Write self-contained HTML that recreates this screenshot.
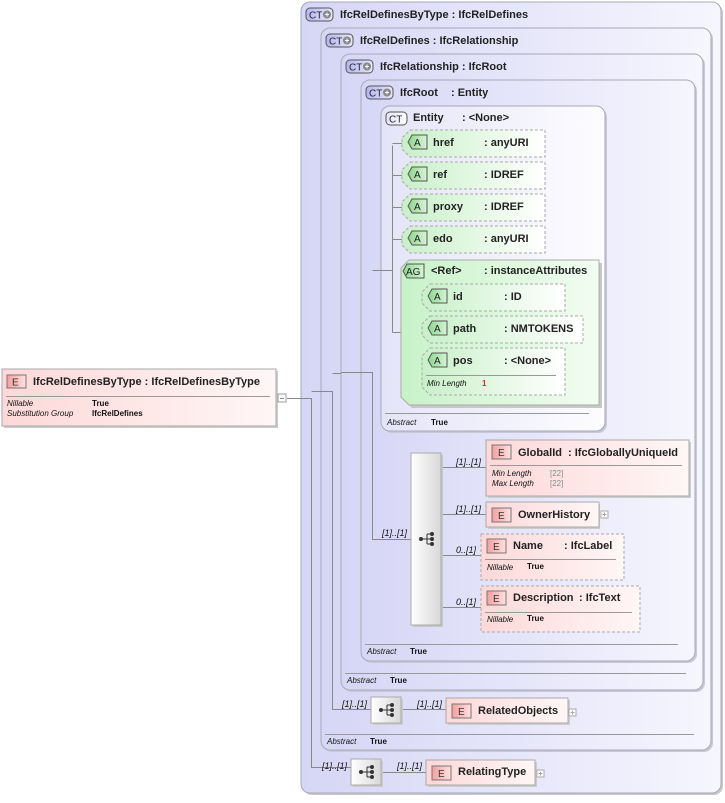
<!DOCTYPE html>
<html><head><meta charset="utf-8"><style>
html,body{margin:0;padding:0;background:#fff;}
svg text{font-family:"Liberation Sans",sans-serif;}
.b{font-size:11px;font-weight:bold;fill:#222;}
.s{font-size:8px;font-style:italic;fill:#111;}
.sv{font-size:8px;font-weight:bold;fill:#111;}
.g{font-size:8px;fill:#888;}
.m{font-size:9px;font-style:italic;fill:#111;}
</style></head><body>
<svg width="725" height="798" viewBox="0 0 725 798" xmlns="http://www.w3.org/2000/svg">
<defs>
<linearGradient id="ct" x1="0" x2="1" y1="0" y2="0"><stop offset="0" stop-color="#d6d6f6"/><stop offset="1" stop-color="#f6f6fe"/></linearGradient>
<linearGradient id="ent" x1="0" x2="1"><stop offset="0" stop-color="#e4e4f8"/><stop offset="1" stop-color="#fdfdff"/></linearGradient>
<linearGradient id="el" x1="0" x2="1"><stop offset="0" stop-color="#fdd8d8"/><stop offset="1" stop-color="#fff6f6"/></linearGradient>
<linearGradient id="at" x1="0" x2="1"><stop offset="0" stop-color="#c8f0c8"/><stop offset="1" stop-color="#ffffff"/></linearGradient>
<linearGradient id="ag" x1="0" x2="1"><stop offset="0" stop-color="#c8f2c8"/><stop offset="1" stop-color="#f2fdf2"/></linearGradient>
<linearGradient id="sq" x1="0" x2="1"><stop offset="0" stop-color="#ffffff"/><stop offset="1" stop-color="#d8d8d8"/></linearGradient>
<linearGradient id="eb" x1="0" x2="1"><stop offset="0" stop-color="#f4a0a0"/><stop offset="1" stop-color="#fde0e0"/></linearGradient>
<linearGradient id="ab" x1="0" x2="1"><stop offset="0" stop-color="#8ed48e"/><stop offset="1" stop-color="#d6f5d6"/></linearGradient>
<linearGradient id="cb" x1="0" x2="1"><stop offset="0" stop-color="#b6b6ee"/><stop offset="1" stop-color="#e6e6fb"/></linearGradient>
<g id="seqicon"><circle cx="-6" cy="0" r="2" fill="#333"/><path d="M-6 0H0M0 -5V5M0 -5H4M0 0H4M0 5H4" stroke="#333" fill="none"/><circle cx="5" cy="-5" r="2" fill="#333"/><circle cx="5" cy="0" r="2" fill="#333"/><circle cx="5" cy="5" r="2" fill="#333"/></g>
</defs>

<!-- nested CT boxes -->
<rect x="303" y="4" width="420" height="791" rx="9" fill="#c8c8c8"/>
<rect x="301" y="2" width="420" height="791" rx="9" fill="url(#ct)" stroke="#a8a8b8"/>
<rect x="323" y="30" width="390" height="722" rx="9" fill="#c8c8d8"/>
<rect x="321" y="28" width="390" height="722" rx="9" fill="url(#ct)" stroke="#a8a8b8"/>
<rect x="343" y="56" width="362" height="636" rx="9" fill="#c8c8d8"/>
<rect x="341" y="54" width="362" height="636" rx="9" fill="url(#ct)" stroke="#a8a8b8"/>
<rect x="363" y="82" width="334" height="581" rx="9" fill="#c8c8d8"/>
<rect x="361" y="80" width="334" height="581" rx="9" fill="url(#ct)" stroke="#a8a8b8"/>
<rect x="383" y="108" width="224" height="325" rx="9" fill="#c8c8d8"/>
<rect x="381" y="106" width="224" height="325" rx="9" fill="url(#ent)" stroke="#a8a8b8"/>

<!-- CT badges & headers -->
<g>
<rect x="306" y="8" width="27" height="13" rx="4" fill="url(#cb)" stroke="#555"/><text x="309" y="18.5" font-size="10" fill="#223">CT</text><circle cx="327" cy="14.5" r="4" fill="#888"/><path d="M325 14.5h4M327 12.5v4" stroke="#fff"/>
<text class="b" x="340" y="18">IfcRelDefinesByType : IfcRelDefines</text>
<rect x="326" y="34" width="27" height="13" rx="4" fill="url(#cb)" stroke="#555"/><text x="329" y="44.5" font-size="10" fill="#223">CT</text><circle cx="347" cy="40.5" r="4" fill="#888"/><path d="M345 40.5h4M347 38.5v4" stroke="#fff"/>
<text class="b" x="360" y="44">IfcRelDefines : IfcRelationship</text>
<rect x="346" y="60" width="27" height="13" rx="4" fill="url(#cb)" stroke="#555"/><text x="349" y="70.5" font-size="10" fill="#223">CT</text><circle cx="367" cy="66.5" r="4" fill="#888"/><path d="M365 66.5h4M367 64.5v4" stroke="#fff"/>
<text class="b" x="380" y="70">IfcRelationship : IfcRoot</text>
<rect x="366" y="86" width="27" height="13" rx="4" fill="url(#cb)" stroke="#555"/><text x="369" y="96.5" font-size="10" fill="#223">CT</text><circle cx="387" cy="92.5" r="4" fill="#888"/><path d="M385 92.5h4M387 90.5v4" stroke="#fff"/>
<text class="b" x="400" y="96">IfcRoot</text><text class="b" x="451" y="96">: Entity</text>
<rect x="386" y="112" width="21" height="13" rx="4" fill="url(#ent)" stroke="#555"/><text x="389" y="122.5" font-size="10" fill="#223">CT</text>
<text class="b" x="413" y="121">Entity</text><text class="b" x="462" y="121">: &lt;None&gt;</text>
</g>

<!-- connector lines -->
<g stroke="#888" fill="none" stroke-width="1">
<path d="M287 398.5H311.5V767.5H351"/>
<path d="M311.5 391.5H332.5V709.5H371"/>
<path d="M332.5 373.5H341M341 372.5H372.5V539.5H411"/>
<path d="M372.5 270.5H392.5M392.5 145.5V332.5M392.5 143.5H402M392.5 175.5H402M392.5 207.5H402M392.5 239.5H402M392.5 332.5H401"/>
<path d="M412 297.5H422M412 329.5H422M412 361.5H422M412 297V362"/>
<path d="M441 467.5H486M441 514.5H486M441 555.5H481M441 607.5H481"/>
<path d="M401 709.5H446M381 772.5H426"/>
</g>

<!-- left element -->
<rect x="4" y="371" width="274" height="57" fill="#ccc"/>
<rect x="2" y="369" width="274" height="57" fill="url(#el)" stroke="#aaa"/>
<rect x="7" y="375" width="19" height="13" fill="url(#eb)" stroke="#777"/><text x="12" y="385.5" font-size="10" fill="#333">E</text>
<text class="b" x="33" y="385">IfcRelDefinesByType : IfcRelDefinesByType</text>
<line x1="6" y1="396.5" x2="270" y2="396.5" stroke="#999"/>
<text class="s" x="7" y="406">Nillable</text><text class="sv" x="92" y="406">True</text>
<text class="s" x="7" y="416">Substitution Group</text><text class="sv" x="92" y="416">IfcRelDefines</text>
<rect x="278" y="394" width="8" height="8" fill="#fff" stroke="#999"/><path d="M280 398.5h4" stroke="#888"/>

<!-- attributes -->
<g>
<path d="M410 130H545V157H410L402 149V138Z" fill="url(#at)" stroke="#aaa" stroke-dasharray="3 2"/>
<path d="M412 135H427V149H412L408 142Z" fill="url(#ab)" stroke="#555"/><text x="414" y="146" font-size="10" fill="#222">A</text>
<text class="b" x="433" y="146">href</text><text class="b" x="484" y="146">: anyURI</text>

<path d="M410 162H545V189H410L402 181V170Z" fill="url(#at)" stroke="#aaa" stroke-dasharray="3 2"/>
<path d="M412 167H427V181H412L408 174Z" fill="url(#ab)" stroke="#555"/><text x="414" y="178" font-size="10" fill="#222">A</text>
<text class="b" x="433" y="178">ref</text><text class="b" x="484" y="178">: IDREF</text>

<path d="M410 194H545V221H410L402 213V202Z" fill="url(#at)" stroke="#aaa" stroke-dasharray="3 2"/>
<path d="M412 199H427V213H412L408 206Z" fill="url(#ab)" stroke="#555"/><text x="414" y="210" font-size="10" fill="#222">A</text>
<text class="b" x="433" y="210">proxy</text><text class="b" x="484" y="210">: IDREF</text>

<path d="M410 226H545V253H410L402 245V234Z" fill="url(#at)" stroke="#aaa" stroke-dasharray="3 2"/>
<path d="M412 231H427V245H412L408 238Z" fill="url(#ab)" stroke="#555"/><text x="414" y="242" font-size="10" fill="#222">A</text>
<text class="b" x="433" y="242">edo</text><text class="b" x="484" y="242">: anyURI</text>
</g>

<!-- attribute group -->
<path d="M412 263H602V408H412L404 400V271Z" fill="#c8c8c8"/>
<path d="M409 260H599V405H409L401 397V268Z" fill="url(#ag)" stroke="#aaa"/>
<path d="M407 264H424V278H407L403 271Z" fill="url(#ab)" stroke="#555"/><text x="406" y="275" font-size="10" fill="#222">AG</text>
<text class="b" x="431" y="274">&lt;Ref&gt;</text><text class="b" x="484" y="274">: instanceAttributes</text>

<path d="M430 284H565V311H430L422 303V292Z" fill="url(#at)" stroke="#aaa" stroke-dasharray="3 2"/>
<path d="M432 289H447V303H432L428 296Z" fill="url(#ab)" stroke="#555"/><text x="434" y="300" font-size="10" fill="#222">A</text>
<text class="b" x="453" y="300">id</text><text class="b" x="504" y="300">: ID</text>

<path d="M430 316H583V343H430L422 335V324Z" fill="url(#at)" stroke="#aaa" stroke-dasharray="3 2"/>
<path d="M432 321H447V335H432L428 328Z" fill="url(#ab)" stroke="#555"/><text x="434" y="332" font-size="10" fill="#222">A</text>
<text class="b" x="453" y="332">path</text><text class="b" x="504" y="332">: NMTOKENS</text>

<path d="M430 348H565V395H430L422 387V356Z" fill="url(#at)" stroke="#aaa" stroke-dasharray="3 2"/>
<path d="M432 353H447V367H432L428 360Z" fill="url(#ab)" stroke="#555"/><text x="434" y="364" font-size="10" fill="#222">A</text>
<text class="b" x="453" y="364">pos</text><text class="b" x="504" y="364">: &lt;None&gt;</text>
<line x1="426" y1="375.5" x2="556" y2="375.5" stroke="#999"/>
<text class="s" x="427" y="386">Min Length</text><text x="482" y="386" font-size="8" font-weight="bold" fill="#e22">1</text>

<!-- Entity abstract -->
<line x1="385" y1="413.5" x2="589" y2="413.5" stroke="#999"/>
<text class="s" x="387" y="425">Abstract</text><text class="sv" x="431" y="425">True</text>

<!-- sequence big -->
<rect x="413" y="455" width="30" height="172" fill="#c8c8c8"/>
<rect x="411" y="453" width="30" height="172" fill="url(#sq)" stroke="#aaa"/>
<use href="#seqicon" x="427" y="539"/>
<text class="m" x="382" y="536">[1]..[1]</text>
<text class="m" x="456" y="465">[1]..[1]</text>
<text class="m" x="456" y="512">[1]..[1]</text>
<text class="m" x="456" y="553">0..[1]</text>
<text class="m" x="456" y="605">0..[1]</text>

<!-- GlobalId -->
<rect x="488" y="442" width="203" height="56" fill="#ccc"/>
<rect x="486" y="440" width="203" height="56" fill="url(#el)" stroke="#aaa"/>
<rect x="492" y="445" width="19" height="14" fill="url(#eb)" stroke="#777"/><text x="498" y="456" font-size="10" fill="#333">E</text>
<text class="b" x="518" y="456">GlobalId</text><text class="b" x="568" y="456">: IfcGloballyUniqueId</text>
<line x1="490" y1="465.5" x2="682" y2="465.5" stroke="#999"/>
<text class="s" x="492" y="476">Min Length</text><text class="g" x="550" y="476">[22]</text>
<text class="s" x="492" y="486">Max Length</text><text class="g" x="550" y="486">[22]</text>

<!-- OwnerHistory -->
<rect x="488" y="504" width="112" height="25" fill="#ccc"/>
<rect x="486" y="502" width="113" height="25" fill="url(#el)" stroke="#aaa"/>
<rect x="492" y="508" width="19" height="14" fill="url(#eb)" stroke="#777"/><text x="498" y="519" font-size="10" fill="#333">E</text>
<text class="b" x="518" y="518">OwnerHistory</text>
<rect x="601" y="511" width="7" height="7" fill="#fff" stroke="#aaa"/><path d="M602.5 514.5h4M604.5 512.5v4" stroke="#aaa"/>

<!-- Name -->
<rect x="481" y="534" width="143" height="46" fill="url(#el)" stroke="#aaa" stroke-dasharray="3 2"/>
<rect x="487" y="539" width="19" height="14" fill="url(#eb)" stroke="#777"/><text x="493" y="550" font-size="10" fill="#333">E</text>
<text class="b" x="513" y="549">Name</text><text class="b" x="564" y="549">: IfcLabel</text>
<line x1="485" y1="559.5" x2="616" y2="559.5" stroke="#999"/>
<text class="s" x="487" y="570">Nillable</text><text class="sv" x="527" y="569">True</text>

<!-- Description -->
<rect x="481" y="586" width="159" height="46" fill="url(#el)" stroke="#aaa" stroke-dasharray="3 2"/>
<rect x="487" y="591" width="19" height="14" fill="url(#eb)" stroke="#777"/><text x="493" y="602" font-size="10" fill="#333">E</text>
<text class="b" x="513" y="601">Description</text><text class="b" x="579" y="601">: IfcText</text>
<line x1="485" y1="612.5" x2="632" y2="612.5" stroke="#999"/>
<text class="s" x="487" y="622">Nillable</text><text class="sv" x="527" y="621">True</text>

<!-- abstracts -->
<line x1="365" y1="644.5" x2="678" y2="644.5" stroke="#999"/>
<text class="s" x="367" y="654">Abstract</text><text class="sv" x="410" y="654">True</text>
<line x1="345" y1="673.5" x2="686" y2="673.5" stroke="#999"/>
<text class="s" x="347" y="683">Abstract</text><text class="sv" x="390" y="683">True</text>

<!-- RelatedObjects -->
<rect x="373" y="699" width="30" height="26" fill="#ccc"/>
<rect x="371" y="697" width="30" height="26" fill="url(#sq)" stroke="#aaa"/>
<use href="#seqicon" x="387" y="710"/>
<text class="m" x="342" y="707">[1]..[1]</text>
<text class="m" x="417" y="707">[1]..[1]</text>
<rect x="448" y="700" width="122" height="25" fill="#ccc"/>
<rect x="446" y="698" width="122" height="25" fill="url(#el)" stroke="#aaa"/>
<rect x="452" y="704" width="19" height="14" fill="url(#eb)" stroke="#777"/><text x="458" y="715" font-size="10" fill="#333">E</text>
<text class="b" x="478" y="714">RelatedObjects</text>
<rect x="569" y="709" width="7" height="7" fill="#fff" stroke="#aaa"/><path d="M570.5 712.5h4M572.5 710.5v4" stroke="#aaa"/>

<line x1="325" y1="734.5" x2="694" y2="734.5" stroke="#999"/>
<text class="s" x="327" y="744">Abstract</text><text class="sv" x="370" y="744">True</text>

<!-- RelatingType -->
<rect x="353" y="761" width="30" height="26" fill="#ccc"/>
<rect x="351" y="759" width="30" height="26" fill="url(#sq)" stroke="#aaa"/>
<use href="#seqicon" x="367" y="772"/>
<text class="m" x="322" y="769">[1]..[1]</text>
<text class="m" x="397" y="769">[1]..[1]</text>
<rect x="428" y="762" width="109" height="25" fill="#ccc"/>
<rect x="426" y="760" width="109" height="25" fill="url(#el)" stroke="#aaa"/>
<rect x="432" y="766" width="19" height="14" fill="url(#eb)" stroke="#777"/><text x="438" y="777" font-size="10" fill="#333">E</text>
<text class="b" x="458" y="775">RelatingType</text>
<rect x="537" y="770" width="7" height="7" fill="#fff" stroke="#aaa"/><path d="M538.5 773.5h4M540.5 771.5v4" stroke="#aaa"/>
</svg>
</body></html>
